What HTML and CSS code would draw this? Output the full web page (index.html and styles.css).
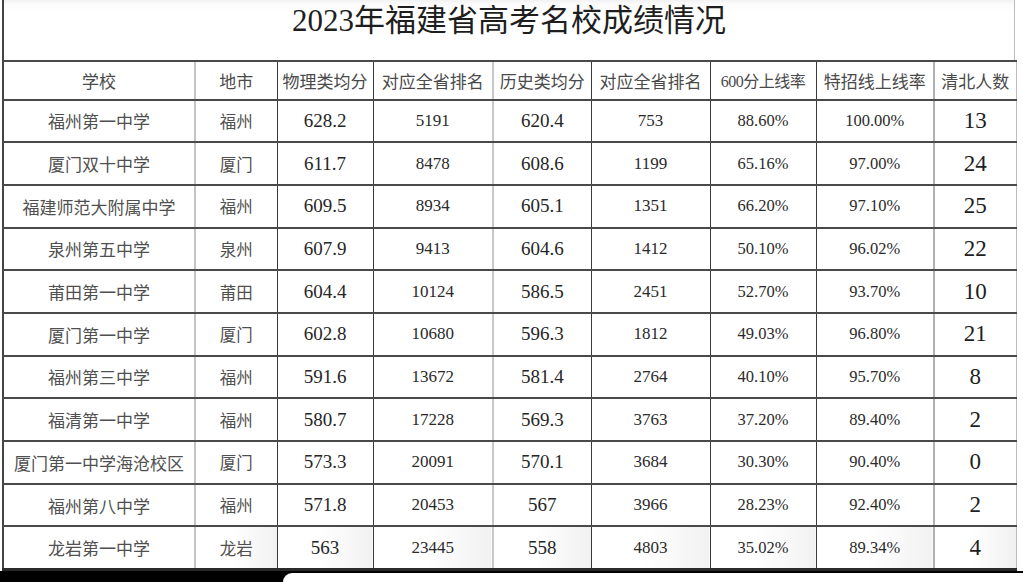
FILE: index.html
```html
<!DOCTYPE html>
<html lang="zh-CN">
<head>
<meta charset="utf-8">
<title>2023年福建省高考名校成绩情况</title>
<link rel="stylesheet" href="styles.css">
</head>
<body>
<div class="page">
  <div class="sheet">
    <div class="title">2023年福建省高考名校成绩情况</div>
    <table class="grid">
      <colgroup>
        <col class="c1"><col class="c2"><col class="c3"><col class="c4"><col class="c5"><col class="c6"><col class="c7"><col class="c8"><col class="c9">
      </colgroup>
      <thead>
        <tr class="head">
          <th>学校</th><th>地市</th><th>物理类均分</th><th>对应全省排名</th><th>历史类均分</th><th>对应全省排名</th><th class="mix">600分上线率</th><th>特招线上线率</th><th>清北人数</th>
        </tr>
      </thead>
      <tbody>
        <tr><td>福州第一中学</td><td class="city">福州</td><td class="avg">628.2</td><td class="rk">5191</td><td class="avg">620.4</td><td class="rk">753</td><td class="pct">88.60%</td><td class="pct">100.00%</td><td class="qb">13</td></tr>
        <tr><td>厦门双十中学</td><td class="city">厦门</td><td class="avg">611.7</td><td class="rk">8478</td><td class="avg">608.6</td><td class="rk">1199</td><td class="pct">65.16%</td><td class="pct">97.00%</td><td class="qb">24</td></tr>
        <tr><td>福建师范大附属中学</td><td class="city">福州</td><td class="avg">609.5</td><td class="rk">8934</td><td class="avg">605.1</td><td class="rk">1351</td><td class="pct">66.20%</td><td class="pct">97.10%</td><td class="qb">25</td></tr>
        <tr><td>泉州第五中学</td><td class="city">泉州</td><td class="avg">607.9</td><td class="rk">9413</td><td class="avg">604.6</td><td class="rk">1412</td><td class="pct">50.10%</td><td class="pct">96.02%</td><td class="qb">22</td></tr>
        <tr><td>莆田第一中学</td><td class="city">莆田</td><td class="avg">604.4</td><td class="rk">10124</td><td class="avg">586.5</td><td class="rk">2451</td><td class="pct">52.70%</td><td class="pct">93.70%</td><td class="qb">10</td></tr>
        <tr><td>厦门第一中学</td><td class="city">厦门</td><td class="avg">602.8</td><td class="rk">10680</td><td class="avg">596.3</td><td class="rk">1812</td><td class="pct">49.03%</td><td class="pct">96.80%</td><td class="qb">21</td></tr>
        <tr><td>福州第三中学</td><td class="city">福州</td><td class="avg">591.6</td><td class="rk">13672</td><td class="avg">581.4</td><td class="rk">2764</td><td class="pct">40.10%</td><td class="pct">95.70%</td><td class="qb">8</td></tr>
        <tr><td>福清第一中学</td><td class="city">福州</td><td class="avg">580.7</td><td class="rk">17228</td><td class="avg">569.3</td><td class="rk">3763</td><td class="pct">37.20%</td><td class="pct">89.40%</td><td class="qb">2</td></tr>
        <tr><td>厦门第一中学海沧校区</td><td class="city">厦门</td><td class="avg">573.3</td><td class="rk">20091</td><td class="avg">570.1</td><td class="rk">3684</td><td class="pct">30.30%</td><td class="pct">90.40%</td><td class="qb">0</td></tr>
        <tr><td>福州第八中学</td><td class="city">福州</td><td class="avg">571.8</td><td class="rk">20453</td><td class="avg">567</td><td class="rk">3966</td><td class="pct">28.23%</td><td class="pct">92.40%</td><td class="qb">2</td></tr>
        <tr class="last"><td>龙岩第一中学</td><td class="city">龙岩</td><td class="avg">563</td><td class="rk">23445</td><td class="avg">558</td><td class="rk">4803</td><td class="pct">35.02%</td><td class="pct">89.34%</td><td class="qb">4</td></tr>
      </tbody>
    </table>
  </div>
  <div class="strip"><div class="strip-card"></div></div>
</div>
</body>
</html>
```

FILE: styles.css
```css
html, body {
  margin: 0;
  padding: 0;
  background: #ffffff;
}
.page {
  width: 1023px;
  height: 582px;
  overflow: hidden;
  display: flex;
  flex-direction: column;
}
.sheet {
  padding-left: 2px;
  width: 1013px;
}
.title {
  height: 60px;
  box-sizing: border-box;
  border-left: 2px solid #444;
  border-right: 1px solid #bbb;
  background: linear-gradient(#f2f2f2 0, #fbfbfb 4px, #ffffff 12px);
  text-align: center;
  font-family: "Liberation Serif", "Noto Sans CJK SC", serif;
  font-size: 31px;
  line-height: 36px;
  padding-top: 3px;
  color: #1e1e1e;
}
.grid {
  width: 1013px;
  table-layout: fixed;
  border-collapse: collapse;
  font-family: "Liberation Serif", "Noto Sans CJK SC", serif;
  color: #262626;
}
.c1 { width: 192px; }
.c2 { width: 82px; }
.c3 { width: 96px; }
.c4 { width: 120px; }
.c5 { width: 98px; }
.c6 { width: 119px; }
.c7 { width: 106px; }
.c8 { width: 118px; }
.c9 { width: 82px; }
.grid th, .grid td {
  padding: 0;
  text-align: center;
  border-top: 2px solid #4a4a4a;
  border-bottom: 2px solid #4a4a4a;
  border-left: 1px solid #3a3a3a;
  border-right: 1px solid #3a3a3a;
}
.grid th:first-child, .grid td:first-child {
  border-left: 2px solid #444;
}
.grid th:nth-child(2), .grid td:nth-child(2) {
  border-left: 2px solid #c4c4c4;
}
.grid th:nth-child(5), .grid td:nth-child(5) {
  border-left: 2px solid #c8c8c8;
}
.grid th:nth-child(8), .grid td:nth-child(8) {
  border-left: 1px solid #8a8a8a;
}
.grid th:nth-child(9), .grid td:nth-child(9) {
  border-left: 2px solid #b0b0b0;
  border-right: 1px solid #bdbdbd;
}
.head th {
  height: 36.5px;
  font-weight: normal;
  font-size: 17px;
  color: #4a4a4a;
}
.head th.mix {
  font-size: 16px;
  letter-spacing: -0.5px;
}
.grid tbody td {
  height: 40.7px;
  font-size: 17px;
  color: #505050;
}
.grid tbody td.city {
  font-size: 16.5px;
}
.grid tbody td.avg {
  font-size: 19px;
  color: #262626;
}
.grid tbody td.rk {
  font-size: 17px;
  color: #2a2a2a;
}
.grid tbody td.pct {
  font-size: 16.5px;
  color: #2a2a2a;
}
.grid tbody td.qb {
  font-size: 23px;
  color: #1e1e1e;
}
.grid tr.last td {
  border-bottom: 3px solid #2a2a2a;
}
.grid tr.last td:nth-child(n+2) {
  background: linear-gradient(90deg, #ffffff 45%, #f1f1f1 100%);
}
.strip {
  flex: 1;
  background: #000;
  display: flex;
}
.strip-card {
  flex: 1;
  margin-left: 283px;
  margin-top: 2px;
  background: #ffffff;
  border-top-left-radius: 12px;
}
```
